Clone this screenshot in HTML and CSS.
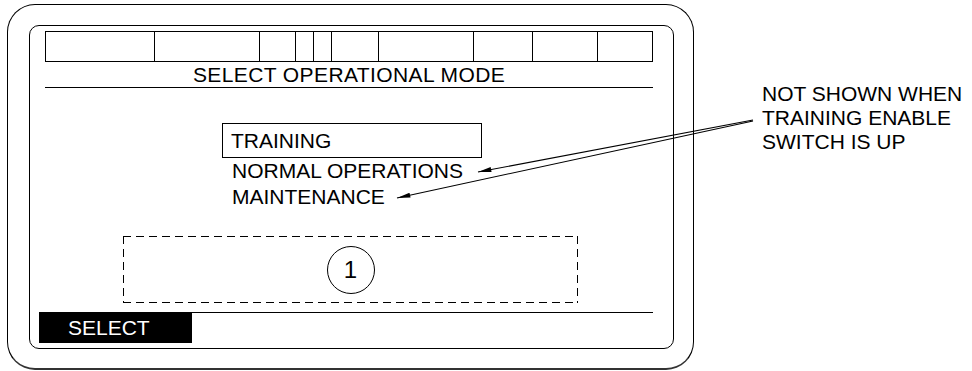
FILE: index.html
```html
<!DOCTYPE html>
<html lang="en">
<head>
  <meta charset="UTF-8">
  <meta name="viewport" content="width=device-width, initial-scale=1.0">
  <title>Select Operational Mode</title>
  <link rel="stylesheet" href="styles.css">
</head>
<body>

  <div class="page">

    <div class="bezel">
      <div class="screen">

        <div class="cells">
          <span></span><span></span><span></span><span></span><span></span>
          <span></span><span></span><span></span><span></span><span></span>
        </div>

        <div class="title">SELECT OPERATIONAL MODE</div>

        <div class="menu">
          <div class="item selected">TRAINING</div>
          <div class="item">NORMAL OPERATIONS</div>
          <div class="item">MAINTENANCE</div>
        </div>

        <div class="dashbox">
          <div class="callout">1</div>
        </div>

        <div class="softkeys">
          <div class="key">SELECT</div>
        </div>

      </div>
    </div>

    <div class="note">
      NOT SHOWN WHEN<br>
      TRAINING ENABLE<br>
      SWITCH IS UP
    </div>

    <!-- leader lines from the note to the two menu items -->
    <svg class="leaders" width="972" height="371" viewBox="0 0 972 371">
      <defs>
        <marker id="head" viewBox="0 0 16 6" refX="16" refY="3" markerWidth="16" markerHeight="5" markerUnits="userSpaceOnUse" orient="auto">
          <path d="M0 0 L16 3 L0 6 Z" fill="#000"/>
        </marker>
      </defs>
      <line x1="753" y1="120" x2="478" y2="172" stroke="#000" stroke-width="1.1" marker-end="url(#head)"/>
      <line x1="753" y1="121" x2="397" y2="198" stroke="#000" stroke-width="1.1" marker-end="url(#head)"/>
    </svg>

  </div>

</body>
</html>
```

FILE: styles.css
```css
body {
  margin: 0;
  padding: 0;
  background-color: #fff;
  color: #000;
  font-family: "Liberation Sans", Arial, sans-serif;
  font-size: 21px;
}

.page {
  position: relative;
  display: flex;
  align-items: flex-start;
  width: 972px;
  height: 371px;
  padding: 4px 0 0 7px;
  box-sizing: border-box;
}

/* outer rounded bezel */
.bezel {
  width: 687px;
  box-sizing: border-box;
  padding: 20px 19px 19px 21px;
  border: 1px solid #000;
  border-bottom: 2px solid #333;
  border-radius: 28px;
}

/* inner screen */
.screen {
  display: flex;
  flex-direction: column;
  padding: 5px 20px 5px 9px;
  border: 1px solid #000;
  border-radius: 10px;
}

.cells {
  display: grid;
  grid-template-columns: 109px 105px 36px 18px 18px 47px 95px 59px 65px 56px;
  width: 608px;
  height: 29px;
  margin-left: 6px;
  border-top: 1px solid #000;
  border-bottom: 1px solid #000;
}

.cells span {
  border-left: 1px solid #000;
}

.cells span:last-child {
  border-right: 1px solid #000;
}

.title {
  width: 608px;
  margin-left: 6px;
  height: 25px;
  line-height: 25px;
  text-align: center;
  letter-spacing: 0.4px;
  border-bottom: 1px solid #000;
}

.menu {
  margin: 35px 0 0 184px;
  line-height: 26px;
}

.item {
  padding-left: 9px;
}

.selected {
  width: 250px;
  height: 33px;
  line-height: 33px;
  padding-left: 8px;
  margin-left: -1px;
  border: 1px solid #000;
}

.dashbox {
  display: flex;
  align-items: center;
  justify-content: center;
  width: 455px;
  height: 67px;
  margin: 26px 0 0 84px;
  background:
    repeating-linear-gradient(90deg, #000 0 8px, transparent 8px 13px) left top / 100% 1px no-repeat,
    repeating-linear-gradient(90deg, #000 0 8px, transparent 8px 13px) left bottom / 100% 1px no-repeat,
    repeating-linear-gradient(180deg, #000 0 8px, transparent 8px 13px) left top / 1px 100% no-repeat,
    repeating-linear-gradient(180deg, #000 0 8px, transparent 8px 13px) right top / 1px 100% no-repeat;
}

.callout {
  width: 46px;
  height: 46px;
  border: 1px solid #000;
  border-radius: 50%;
  display: flex;
  align-items: center;
  justify-content: center;
  font-size: 24px;
}

.softkeys {
  margin-top: 9px;
  width: 614px;
  border-top: 1px solid #000;
}

.key {
  width: 124px;
  height: 30px;
  line-height: 30px;
  padding-left: 29px;
  background-color: #000;
  color: #fff;
}

.note {
  margin: 78px 0 0 68px;
  line-height: 24px;
}

.leaders {
  position: absolute;
  left: 0;
  top: 0;
  pointer-events: none;
}
```
